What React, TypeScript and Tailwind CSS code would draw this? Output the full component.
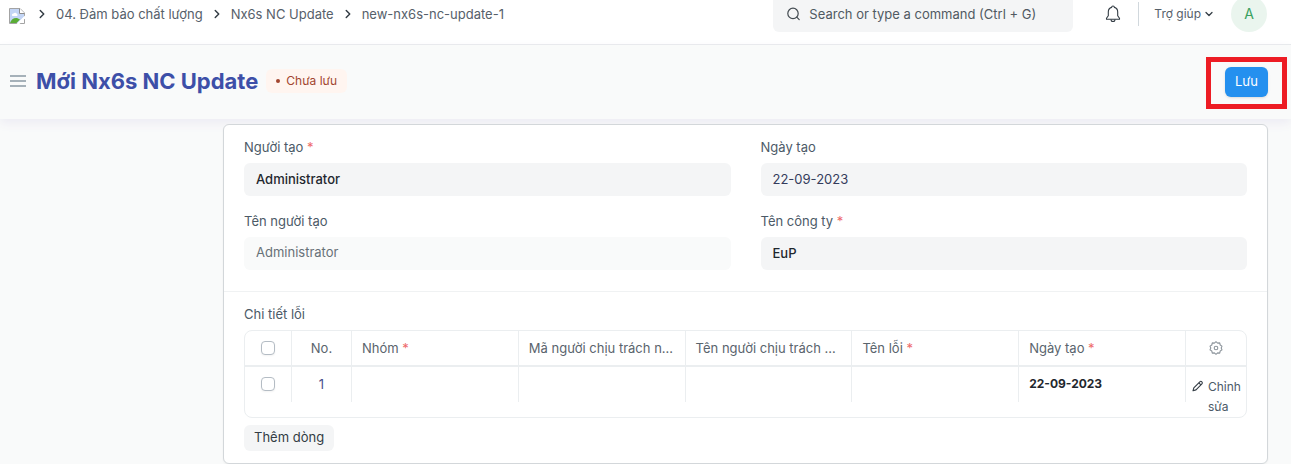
import { ReactNode } from 'react';
import { ChevronDown, ChevronRight } from 'lucide-react';
import clsx from 'clsx';

interface FieldProps {
    id: string;
    label: string;
    value: string;
    required?: boolean;
    readOnly?: boolean;
    className?: string;
}

const crumbs = ['04. Đảm bảo chất lượng', 'Nx6s NC Update', 'new-nx6s-nc-update-1'];

const columns = [
    { label: 'Nhóm', required: true },
    { label: 'Mã người chịu trách nhiệm' },
    { label: 'Tên người chịu trách nhiệm' },
    { label: 'Tên lỗi', required: true },
    { label: 'Ngày tạo', required: true },
];

const rows = [['', '', '', '', '22-09-2023']];

function ImageIcon() {
    return (
        <svg width="16" height="16" viewBox="0 0 16 16" aria-hidden="true">
            <path d="M0.5 0.5H11L15.5 5V15.5H0.5Z" fill="#fff" stroke="#a3a3a3" />
            <path d="M1 1H10.5V5.5H15V9L9 15H1Z" fill="#c3d5f5" />
            <path d="M3 7.5a1.5 1.5 0 0 1 1.5-2 2 2 0 0 1 3.5.5 1.2 1.2 0 0 1 0 2H3.5Z" fill="#fff" />
            <path d="M1 15C2 11.5 5 9.5 8 10l3 1.5-3.5 3.5H1Z" fill="#5aac35" />
            <path d="M10.5 0.5V5.5H15.5" fill="#fff" stroke="#8c8c8c" />
            <path d="M16 7.5L7.5 16H10.5L16 10.5Z" fill="#fff" />
        </svg>
    );
}

function SearchIcon() {
    return (
        <svg width="14" height="14" viewBox="0 0 14 14" fill="none" stroke="#424a50" strokeWidth="1.2" strokeLinecap="round" aria-hidden="true">
            <circle cx="6" cy="6.4" r="5.2" />
            <path d="M9.8 10.2L12.2 12.6" />
        </svg>
    );
}

function BellIcon() {
    return (
        <svg width="16" height="18" viewBox="0 0 16 18" fill="none" stroke="#333c44" strokeWidth="1.1" strokeLinejoin="round" aria-hidden="true">
            <path d="M6.6 2.4a1.4 1.4 0 0 1 2.8 0c2.1.6 3.3 2.4 3.3 4.6v3.7l1.8 2.6v1H1.5v-1l1.8-2.6V7c0-2.2 1.2-4 3.3-4.6Z" />
            <path d="M6 14.5a2 2 0 0 0 4 0" />
        </svg>
    );
}

function GearIcon() {
    return (
        <svg width="14" height="14" viewBox="0 0 14 14" fill="none" stroke="#8d959c" strokeWidth="1.1" strokeLinejoin="round" aria-hidden="true">
            <path d="M7 .7L8.6 2.1 10.7 1.9 11.2 4 13 5.1 12.2 7 13 8.9 11.2 10 10.7 12.1 8.6 11.9 7 13.3 5.4 11.9 3.3 12.1 2.8 10 1 8.9 1.8 7 1 5.1 2.8 4 3.3 1.9 5.4 2.1Z" />
            <circle cx="7" cy="7" r="1.8" />
        </svg>
    );
}

function PencilIcon() {
    return (
        <svg width="12" height="12" viewBox="0 0 12 12" fill="none" stroke="#333c44" strokeWidth="1.1" strokeLinejoin="round" aria-hidden="true">
            <path d="M1.8 7.8L7.8 1.8a1.5 1.5 0 0 1 2.1 0a1.5 1.5 0 0 1 0 2.1L4 9.9 1 10.8Z" />
            <path d="M6.8 2.8L8.9 4.9" />
        </svg>
    );
}

function Required() {
    return <span className="text-[#ee6a6a]"> *</span>;
}

function Field({ id, label, value, required, readOnly, className }: FieldProps) {
    return (
        <div>
            <label htmlFor={id} className="block text-[13px] leading-5 text-[#4c5a67]">
                {label}
                {required && <Required />}
            </label>
            <input
                id={id}
                type="text"
                defaultValue={value}
                readOnly={readOnly}
                className={clsx(
                    'mt-1.5 block h-[33px] w-full rounded-md px-3 text-[13px] outline-none',
                    readOnly ? 'bg-[#f9fafa] pb-1 text-[#687178]' : 'bg-[#f4f5f6] pb-0.5',
                    className,
                )}
            />
        </div>
    );
}

function Check({ label }: { label: string }) {
    return (
        <input
            type="checkbox"
            aria-label={label}
            className="block size-3.5 appearance-none rounded border border-[#b4bcc4] bg-white shadow-xs checked:bg-[#2490ef]"
        />
    );
}

function BodyCell({ children, className }: { children?: ReactNode; className?: string }) {
    return (
        <td className="p-0 align-top">
            <div className={clsx('h-[35px] border-r border-[#ebeef0]', className)}>{children}</div>
        </td>
    );
}

function Navbar() {
    return (
        <header className="flex h-[45px] items-start justify-between border-b border-[#e6e9eb] bg-white pr-6 pl-[9px]">
            <nav className="flex items-center pt-1 text-[13px] leading-5 text-[#56606a]">
                <a href="#" aria-label="Home" className="pt-1 pr-[3px]">
                    <ImageIcon />
                </a>
                {crumbs.map((crumb) => (
                    <span key={crumb} className="flex items-center">
                        <ChevronRight className="mx-[7px] size-3.5 text-[#333c44]" strokeWidth={2.5} />
                        <a href="#">{crumb}</a>
                    </span>
                ))}
            </nav>
            <div className="flex items-start">
                <label className="flex h-8 w-[300px] items-center gap-2 rounded-b-md bg-[#f4f5f6] px-3.5 pb-1">
                    <SearchIcon />
                    <input
                        type="search"
                        aria-label="Search"
                        placeholder="Search or type a command (Ctrl + G)"
                        className="min-w-0 flex-1 pt-0.5 text-[13px] outline-none placeholder:text-[#505a62]"
                    />
                </label>
                <button type="button" aria-label="Notifications" className="mt-[5px] ml-8">
                    <BellIcon />
                </button>
                <div className="mt-0.5 ml-[17px] h-6 border-l border-[#d1d8dd]" />
                <button type="button" className="mt-1 ml-[15px] flex items-center gap-0.5 text-xs leading-5 text-[#56606a]">
                    Trợ giúp
                    <ChevronDown className="size-3 text-[#333c44]" strokeWidth={2.5} />
                </button>
                <button
                    type="button"
                    className="-mt-1 ml-4 size-9 rounded-full bg-[#eaf5ee] text-sm text-[#38a160]"
                >
                    A
                </button>
            </div>
        </header>
    );
}

function PageHead() {
    return (
        <div className="relative flex h-[74px] items-center justify-between bg-[#f9fafa] pr-[23px] pb-px pl-2.5 shadow-[0_4px_10px_#ecebf3]">
            <div className="flex items-center pb-0.5">
                <button type="button" aria-label="Menu" className="flex w-4 flex-col gap-[3px]">
                    <span className="h-0.5 bg-[#a6b1b9]" />
                    <span className="h-0.5 bg-[#a6b1b9]" />
                    <span className="h-0.5 bg-[#a6b1b9]" />
                </button>
                <h1 className="ml-2.5 text-[22px] leading-8 font-bold text-[#3d4fa8]">Mới Nx6s NC Update</h1>
                <span className="ml-2 flex h-6 items-center gap-1.5 rounded-md bg-[#fff5f0] px-2.5 text-xs text-[#a2452f]">
                    <span className="size-1 rounded-full bg-[#a2452f]" />
                    Chưa lưu
                </span>
            </div>
            <div className="relative">
                <button type="button" className="block h-[30px] rounded-md bg-[#2490ef] px-2.5 text-[13px] text-white shadow-sm">
                    Lưu
                </button>
                <div className="pointer-events-none absolute -inset-x-[19px] -top-2.5 -bottom-3 border-5 border-[#ed1c24]" />
            </div>
        </div>
    );
}

function DetailTable() {
    return (
        <div className="mt-1.5 rounded-lg border border-[#ebeef0]">
            <table className="w-full table-fixed border-separate border-spacing-0 text-left text-[13px] leading-5 text-[#5a646d]">
                <colgroup>
                    <col className="w-[47px]" />
                    <col className="w-[60px]" />
                    {columns.map((column) => (
                        <col key={column.label} />
                    ))}
                    <col className="w-[60px]" />
                </colgroup>
                <thead>
                    <tr className="h-9 *:border-b-2 *:border-[#ebeef0] *:font-normal">
                        <th className="border-r py-0 pr-0 pl-4">
                            <Check label="Select all" />
                        </th>
                        <th className="border-r p-0 text-center">No.</th>
                        {columns.map((column) => (
                            <th key={column.label} className="truncate border-r px-2.5 py-0">
                                {column.label}
                                {column.required && <Required />}
                            </th>
                        ))}
                        <th className="p-0">
                            <button type="button" aria-label="Configure columns" className="mx-auto block w-3.5">
                                <GearIcon />
                            </button>
                        </th>
                    </tr>
                </thead>
                <tbody>
                    {rows.map((row, index) => (
                        <tr key={index} className="h-[50px]">
                            <BodyCell className="pt-2.5 pl-4">
                                <Check label={`Select row ${index + 1}`} />
                            </BodyCell>
                            <BodyCell className="pt-[7px] text-center text-[#4a4f8c]">{index + 1}</BodyCell>
                            {row.map((value, i) => (
                                <BodyCell key={i} className="px-2.5 pt-[7px] text-xs leading-5 font-bold text-[#1f272e]">
                                    {value}
                                </BodyCell>
                            ))}
                            <td className="p-0 align-top">
                                <button type="button" className="flex gap-1 pt-2.5 pl-1.5 text-left text-xs leading-5 text-[#4c5a67]">
                                    <span className="pt-[3px]">
                                        <PencilIcon />
                                    </span>
                                    Chỉnh sửa
                                </button>
                            </td>
                        </tr>
                    ))}
                </tbody>
            </table>
        </div>
    );
}

export default function App() {
    return (
        <div className="min-h-screen bg-[#f9fafa] font-[Inter,sans-serif]">
            <Navbar />
            <PageHead />
            <main className="pt-[5px] pr-[23px] pl-[223px]">
                <form
                    className="relative rounded-md border border-[#d3d7da] bg-white shadow-xs"
                    onSubmit={(e) => e.preventDefault()}
                >
                    <section className="grid grid-cols-2 gap-x-[30px] gap-y-[15px] border-b border-[#f0f2f3] px-5 pt-3 pb-[21px]">
                        <Field id="creator" label="Người tạo" value="Administrator" required className="font-medium text-[#1f272e]" />
                        <Field id="date" label="Ngày tạo" value="22-09-2023" className="text-[#343c5c]" />
                        <Field id="creator-name" label="Tên người tạo" value="Administrator" readOnly />
                        <Field id="company" label="Tên công ty" value="EuP" required className="font-medium text-[#1f272e]" />
                    </section>
                    <section className="px-5 pt-3 pb-3">
                        <h2 className="text-[13px] leading-5 text-[#4c5a67]">Chi tiết lỗi</h2>
                        <DetailTable />
                        <button type="button" className="mt-[7px] block h-[26px] rounded-md bg-[#f4f5f6] px-2.5 text-[13px] text-[#333c44]">
                            Thêm dòng
                        </button>
                    </section>
                </form>
            </main>
        </div>
    );
}
